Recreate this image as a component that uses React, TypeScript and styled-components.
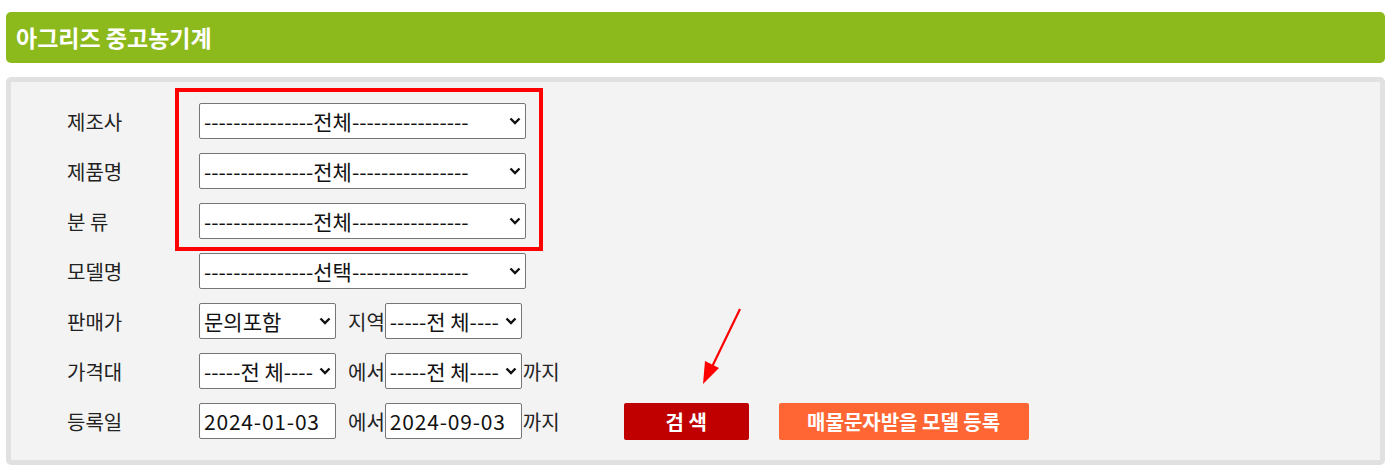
import styled, { createGlobalStyle } from 'styled-components';

const GlobalStyle = createGlobalStyle`
  body {
    margin: 0;
    background: #fff;
    font-family: 'Noto Sans CJK KR', 'Noto Sans', sans-serif;
    color: #222;
  }
`;

const FONT = `'Noto Sans CJK KR', 'Noto Sans', sans-serif`;

const CHEVRON =
  "url(\"data:image/svg+xml;utf8,<svg xmlns='http://www.w3.org/2000/svg' width='12' height='8' viewBox='0 0 12 8'><path d='M1.5 1.5 L6 6 L10.5 1.5' fill='none' stroke='%23111' stroke-width='2.4'/></svg>\")";

const rows = [
  { label: '제조사', value: '---------------전체----------------' },
  { label: '제품명', value: '---------------전체----------------' },
  { label: '분 류', value: '---------------전체----------------' },
  { label: '모델명', value: '---------------선택----------------' },
];

export default function App() {
  return (
    <>
      <GlobalStyle />
      <Page>
        <TitleBar>아그리즈 중고농기계</TitleBar>
        <Panel>
          {rows.map((row) => (
            <Row key={row.label}>
              <Label>{row.label}</Label>
              <Select $w={327}>
                <option>{row.value}</option>
              </Select>
            </Row>
          ))}
          <Row>
            <Label>판매가</Label>
            <Select $w={137}>
              <option>문의포함</option>
            </Select>
            <Word $gap>지역</Word>
            <Select $w={137}>
              <option>-----전 체----</option>
            </Select>
          </Row>
          <Row>
            <Label>가격대</Label>
            <Select $w={137}>
              <option>-----전 체----</option>
            </Select>
            <Word $gap>에서</Word>
            <Select $w={137}>
              <option>-----전 체----</option>
            </Select>
            <Word>까지</Word>
          </Row>
          <Row>
            <Label>등록일</Label>
            <DateInput defaultValue="2024-01-03" />
            <Word $gap>에서</Word>
            <DateInput defaultValue="2024-09-03" />
            <Word>까지</Word>
            <SearchButton>검 색</SearchButton>
            <AlertButton>매물문자받을 모델 등록</AlertButton>
          </Row>

          {/* 캡처용 강조 표시 */}
          <Highlight />
          <Arrow width="44" height="80" viewBox="0 0 44 80">
            <line x1="40" y1="2" x2="10" y2="64" stroke="#f00" strokeWidth="2.2" />
            <polygon points="3,77 5,54 19,61" fill="#f00" />
          </Arrow>
        </Panel>
      </Page>
    </>
  );
}

const Page = styled.div`
  padding: 12px 6px 7px 6px;
  width: 1379px;
`;

const TitleBar = styled.div`
  height: 51px;
  background: #8cba1c;
  border-radius: 5px;
  color: #fff;
  font-family: ${FONT};
  font-weight: 700;
  font-size: 23px;
  line-height: 51px;
  padding-left: 10px;
`;

const Panel = styled.div`
  position: relative;
  margin-top: 14px;
  background: #f3f3f3;
  border: 5px solid #e1e1e1;
  border-radius: 5px;
  padding: 21px 0 21px 56px;
  display: flex;
  flex-direction: column;
  gap: 14px;
`;

const Row = styled.div`
  display: flex;
  align-items: center;
  height: 36px;
`;

const Label = styled.div`
  width: 132px;
  font-size: 20px;
  font-family: ${FONT};
  color: #222;
`;

const Word = styled.span<{ $gap?: boolean }>`
  font-size: 20px;
  font-family: ${FONT};
  color: #222;
  margin-left: ${({ $gap }) => ($gap ? '12px' : '1px')};
`;

const Select = styled.select<{ $w: number }>`
  appearance: none;
  width: ${({ $w }) => $w}px;
  height: 36px;
  font-size: 21px;
  font-family: ${FONT};
  color: #111;
  background: #fff ${CHEVRON} no-repeat right 4px center;
  border: 1px solid #767676;
  border-radius: 2px;
  padding: 0 20px 0 4px;
  box-sizing: border-box;
`;

const DateInput = styled.input`
  width: 137px;
  height: 36px;
  font-size: 21px;
  letter-spacing: 0.8px;
  font-family: ${FONT};
  color: #111;
  background: #fff;
  border: 1px solid #767676;
  border-radius: 2px;
  padding: 0 4px;
  box-sizing: border-box;
`;

const Button = styled.button`
  height: 37px;
  border: none;
  border-radius: 2px;
  color: #fff;
  font-family: ${FONT};
  font-weight: 700;
  font-size: 20px;
  padding: 0;
  cursor: pointer;
`;

const SearchButton = styled(Button)`
  width: 125px;
  margin-left: 64px;
  background: #c00000;
`;

const AlertButton = styled(Button)`
  width: 250px;
  margin-left: 30px;
  background: #ff6633;
`;

const Highlight = styled.div`
  position: absolute;
  left: 164px;
  top: 6px;
  width: 360px;
  height: 155px;
  border: 4px solid #f00;
  pointer-events: none;
`;

const Arrow = styled.svg`
  position: absolute;
  left: 689px;
  top: 225px;
`;
